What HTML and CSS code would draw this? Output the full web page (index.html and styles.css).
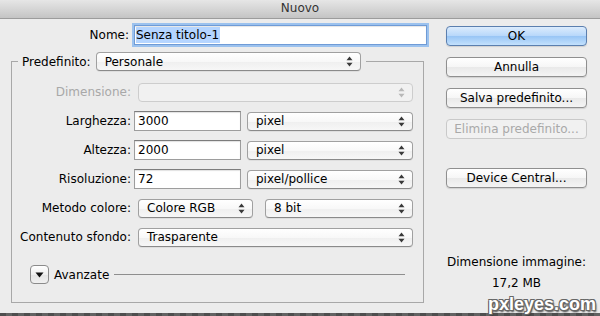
FILE: index.html
```html
<!DOCTYPE html>
<html lang="it">
<head>
<meta charset="utf-8">
<title>Nuovo</title>
<link rel="stylesheet" href="styles.css">
</head>
<body>
<div class="window">
  <div class="titlebar">Nuovo</div>
  <div class="body">
    <div class="main">
      <div class="name-row">
        <span class="name-lbl">Nome:</span>
        <div class="text-field focus"><span class="sel-text">Senza titolo-1</span></div>
      </div>
      <fieldset class="preset">
        <legend class="preset-legend">
          <span class="legend-lbl">Predefinito:</span>
          <div class="select w-preset"><span>Personale</span><svg class="arrows" width="7" height="11" viewBox="0 0 7 11"><path d="M0.5 4.2 L3.5 0.6 L6.5 4.2 Z M0.5 6.8 L3.5 10.4 L6.5 6.8 Z"/></svg></div>
        </legend>
        <div class="row">
          <span class="lbl dis">Dimensione:</span>
          <div class="select disabled w-full"><span></span><svg class="arrows" width="7" height="11" viewBox="0 0 7 11"><path d="M0.5 4.2 L3.5 0.6 L6.5 4.2 Z M0.5 6.8 L3.5 10.4 L6.5 6.8 Z"/></svg></div>
        </div>
        <div class="row">
          <span class="lbl">Larghezza:</span>
          <div class="text-field w-num">3000</div>
          <div class="select w-unit"><span>pixel</span><svg class="arrows" width="7" height="11" viewBox="0 0 7 11"><path d="M0.5 4.2 L3.5 0.6 L6.5 4.2 Z M0.5 6.8 L3.5 10.4 L6.5 6.8 Z"/></svg></div>
        </div>
        <div class="row">
          <span class="lbl">Altezza:</span>
          <div class="text-field w-num">2000</div>
          <div class="select w-unit"><span>pixel</span><svg class="arrows" width="7" height="11" viewBox="0 0 7 11"><path d="M0.5 4.2 L3.5 0.6 L6.5 4.2 Z M0.5 6.8 L3.5 10.4 L6.5 6.8 Z"/></svg></div>
        </div>
        <div class="row">
          <span class="lbl">Risoluzione:</span>
          <div class="text-field w-num">72</div>
          <div class="select w-unit"><span>pixel/pollice</span><svg class="arrows" width="7" height="11" viewBox="0 0 7 11"><path d="M0.5 4.2 L3.5 0.6 L6.5 4.2 Z M0.5 6.8 L3.5 10.4 L6.5 6.8 Z"/></svg></div>
        </div>
        <div class="row">
          <span class="lbl">Metodo colore:</span>
          <div class="select w-mode"><span>Colore RGB</span><svg class="arrows" width="7" height="11" viewBox="0 0 7 11"><path d="M0.5 4.2 L3.5 0.6 L6.5 4.2 Z M0.5 6.8 L3.5 10.4 L6.5 6.8 Z"/></svg></div>
          <div class="select w-bits"><span>8 bit</span><svg class="arrows" width="7" height="11" viewBox="0 0 7 11"><path d="M0.5 4.2 L3.5 0.6 L6.5 4.2 Z M0.5 6.8 L3.5 10.4 L6.5 6.8 Z"/></svg></div>
        </div>
        <div class="row">
          <span class="lbl">Contenuto sfondo:</span>
          <div class="select w-full"><span>Trasparente</span><svg class="arrows" width="7" height="11" viewBox="0 0 7 11"><path d="M0.5 4.2 L3.5 0.6 L6.5 4.2 Z M0.5 6.8 L3.5 10.4 L6.5 6.8 Z"/></svg></div>
        </div>
        <div class="adv">
          <div class="disclosure"><svg width="9" height="6" viewBox="0 0 9 6"><path d="M0.5 0.5 L8.5 0.5 L4.5 5.5 Z"/></svg></div>
          <span class="adv-lbl">Avanzate</span>
          <div class="adv-line"></div>
        </div>
      </fieldset>
    </div>
    <div class="side">
      <div class="btn default">OK</div>
      <div class="btn">Annulla</div>
      <div class="btn">Salva predefinito...</div>
      <div class="btn disabled">Elimina predefinito...</div>
      <div class="btn device">Device Central...</div>
      <div class="info">
        <div class="info-title">Dimensione immagine:</div>
        <div class="info-val">17,2 MB</div>
      </div>
    </div>
  </div>
  <div class="desk"></div>
  <div class="watermark">pxleyes.com</div>
</div>
</body>
</html>
```

FILE: styles.css
```css
* { box-sizing: border-box; }
html, body { margin: 0; padding: 0; }
body {
  width: 600px;
  height: 316px;
  overflow: hidden;
  background: #5a5a5a;
  font-family: "DejaVu Sans", "Liberation Sans", sans-serif;
  font-size: 12px;
  color: #000;
}
.window {
  position: relative;
  width: 600px;
  height: 316px;
  display: flex;
  flex-direction: column;
  background: #ececec;
}
.titlebar {
  height: 19px;
  flex: none;
  text-align: center;
  line-height: 16px;
  font-size: 12px;
  color: #333;
  background: linear-gradient(#e6e6e6, #d2d2d2 60%, #c4c4c4);
  border-bottom: 1px solid #9c9c9c;
}
.body {
  flex: 1;
  display: flex;
  align-items: flex-start;
}
.main {
  width: 436px;
  flex: none;
  padding-top: 6px;
}
.name-row {
  display: flex;
  align-items: center;
  height: 20px;
}
.name-lbl {
  width: 130px;
  text-align: right;
  padding-right: 1px;
}
.text-field {
  height: 20px;
  background: #fff;
  border: 1px solid #9d9d9d;
  border-top-color: #7c7c7c;
  box-shadow: inset 0 1px 1px rgba(0,0,0,0.12);
  padding-left: 3px;
  line-height: 18px;
  white-space: nowrap;
}
.text-field.focus {
  margin-left: 4px;
  width: 293px;
  border-color: #6f9bd6;
  box-shadow: 0 0 0 2px #9cc2ee, inset 0 1px 1px rgba(0,0,0,0.1);
  padding-left: 1px;
}
.sel-text {
  background: #b5d5ff;
  padding: 1px 1px 1px 0;
}
.preset {
  margin: 7px 0 0 11px;
  width: 413px;
  height: 251px;
  border: 1px solid #a8a8a8;
  padding: 0;
}
.preset-legend {
  display: flex;
  align-items: center;
  padding: 0 5px 0 4px;
  margin-left: 6px;
}
.legend-lbl {
  padding-right: 5px;
}
.select {
  height: 19px;
  display: flex;
  align-items: center;
  justify-content: space-between;
  border: 1px solid #a0a0a0;
  border-bottom-color: #8a8a8a;
  border-radius: 4px;
  background: linear-gradient(#ffffff, #f8f8f8 50%, #efefef 51%, #f7f7f7);
  box-shadow: 0 1px 0 rgba(0,0,0,0.06);
  padding: 0 7px 0 8px;
  white-space: nowrap;
}
.arrows { fill: #3a3a3a; flex: none; }
.select.disabled { border-color: #cdcdcd; background: #f1f1f1; box-shadow: none; }
.select.disabled .arrows { fill: #b8b8b8; }
.w-preset { width: 265px; }
.row {
  display: flex;
  align-items: center;
  height: 20px;
  margin-top: 9px;
}
.row:first-of-type { margin-top: 11px; }
.lbl {
  width: 122px;
  text-align: right;
  padding-right: 3px;
}
.lbl.dis { color: #a8a8a8; }
.row .select { margin-left: 4px; }
.row .text-field { margin-left: 0; }
.w-full { width: 275px; }
.w-num { width: 107px; }
.row .w-unit { margin-left: 6px; width: 166px; }
.w-mode { width: 115px; }
.row .w-bits { margin-left: 12px; width: 148px; }
.adv {
  display: flex;
  align-items: center;
  margin-top: 18px;
  padding-left: 18px;
}
.disclosure {
  width: 19px;
  height: 19px;
  border: 1px solid #8b8b8b;
  border-radius: 4px;
  background: linear-gradient(#ffffff, #efefef 50%, #e4e4e4 51%, #f0f0f0);
  display: flex;
  align-items: center;
  justify-content: center;
}
.disclosure svg { fill: #111; }
.adv-lbl { margin-left: 5px; }
.adv-line {
  margin-left: 5px;
  width: 291px;
  height: 1px;
  background: #8e8e8e;
}
.side {
  width: 141px;
  margin-left: 10px;
  padding-top: 7px;
  display: flex;
  flex-direction: column;
  gap: 11px;
}
.btn {
  height: 20px;
  border: 1px solid #8f8f8f;
  border-radius: 4px;
  background: linear-gradient(#ffffff, #f6f6f6 50%, #e9e9e9 51%, #f4f4f4);
  box-shadow: 0 1px 1px rgba(0,0,0,0.12);
  text-align: center;
  line-height: 18px;
  white-space: nowrap;
}
.btn.default {
  border-color: #5b7faf;
  background: linear-gradient(#dcecfd, #b7d7fa 50%, #98c5f5 51%, #c3e1fd);
}
.btn.disabled {
  color: #a9a9a9;
  border-color: #c9c9c9;
  background: #f1f1f1;
  box-shadow: none;
}
.btn.device { margin-top: 18px; }
.info {
  margin-top: 53px;
  text-align: center;
  line-height: 21px;
}
.desk {
  height: 3px;
  flex: none;
  background: repeating-linear-gradient(90deg, #4e4e4e 0 6px, #626262 6px 12px);
}
.watermark {
  position: absolute;
  right: 4px;
  bottom: 1px;
  font-family: "Liberation Sans", Arial, sans-serif;
  font-weight: bold;
  font-size: 18px;
  color: #fff;
  text-shadow: 1px 1px 0 #666, -1px -1px 0 #666, 1px -1px 0 #666, -1px 1px 0 #666, 1px 2px 2px #333;
}
```
